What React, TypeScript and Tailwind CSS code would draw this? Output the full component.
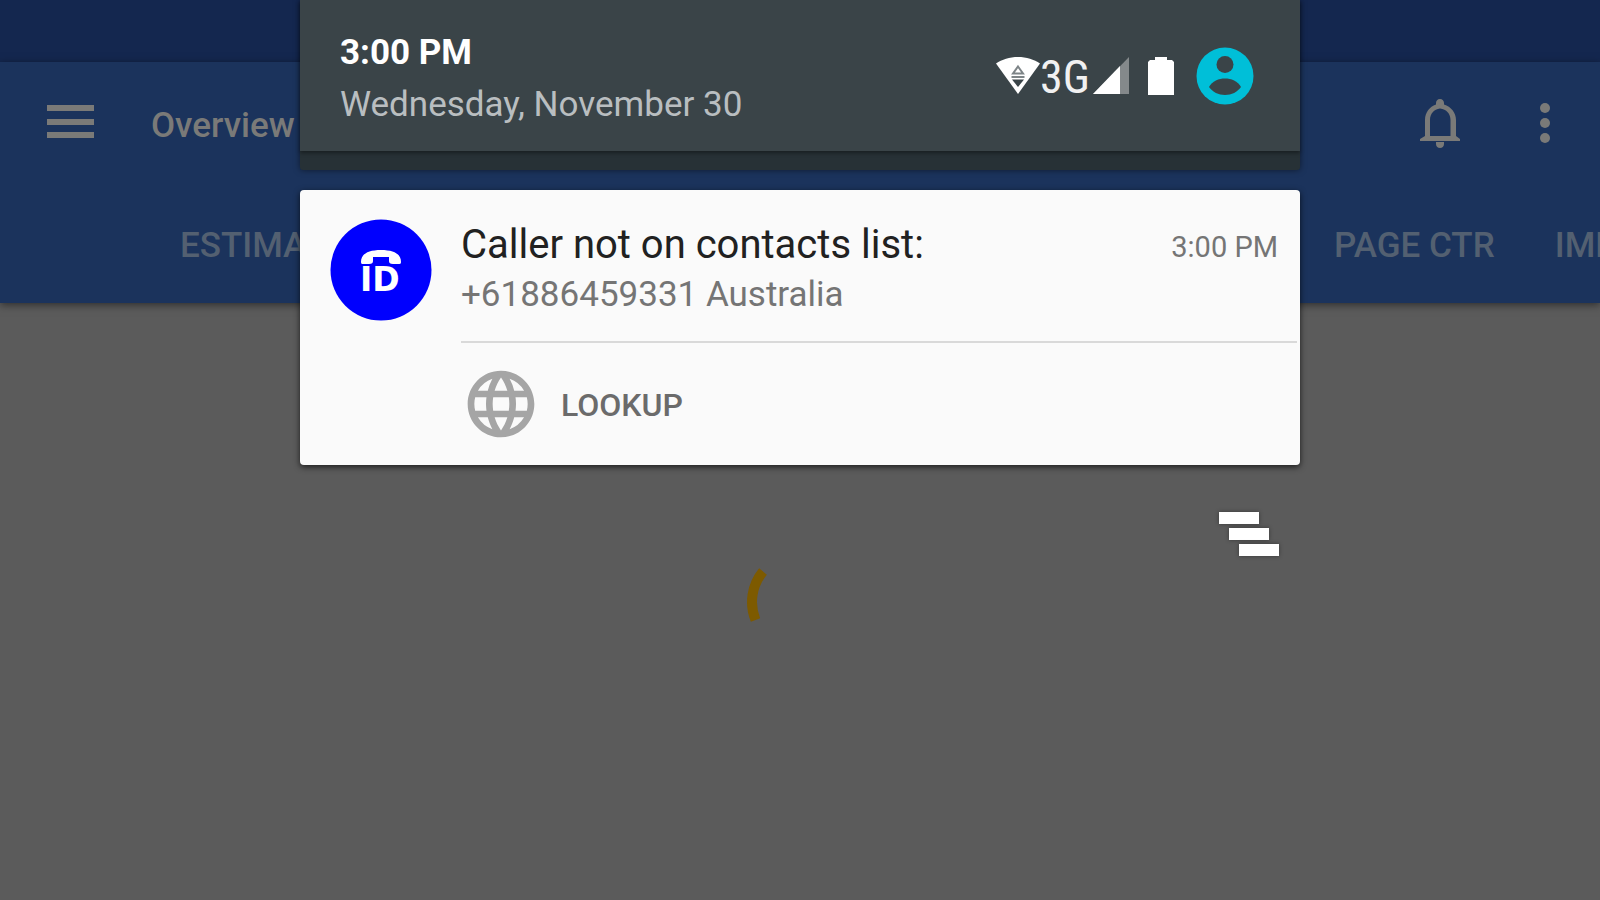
import { MdLanguage } from 'react-icons/md';

function MenuIcon() {
    return (
        <svg viewBox="0 0 48 38" className="w-12 h-[38px]" fill="currentColor" aria-hidden="true">
            <rect x="0" y="0" width="47" height="6" />
            <rect x="0" y="14" width="47" height="6" />
            <rect x="0" y="27" width="47" height="6" />
        </svg>
    );
}

function BellIcon() {
    return (
        <svg viewBox="0 0 40 50" className="w-10 h-[50px]" fill="currentColor" aria-hidden="true">
            <path
                fillRule="evenodd"
                d="M20 0c2.500 0 4 1.800 4 4v1.400C31 7.500 36 13.500 36 21v16l4 3v2H0v-2l5-3V21C5 13.500 9.500 7.500 16 5.400V4c0-2.200 1.500-4 4-4zm0 9.500C14 10 10 15 10 21v16h20.500V21c0-6-4-11-10.500-11.500z"
            />
            <path d="M16 43h8v2c0 2.500-1.800 4-4 4s-4-1.500-4-4z" />
        </svg>
    );
}

function MoreIcon() {
    return (
        <svg viewBox="0 0 10 42" className="w-[10px] h-[42px]" fill="currentColor" aria-hidden="true">
            <circle cx="5" cy="5" r="5" />
            <circle cx="5" cy="20" r="5" />
            <circle cx="5" cy="35" r="5" />
        </svg>
    );
}

function WifiIcon() {
    return (
        <svg viewBox="0 0 44 37" className="w-11 h-[37px]" aria-hidden="true">
            <path d="M0 6.500C6 2.500 13.500 0 22 0s16 2.500 22 6.500L22 37z" fill="#fff" />
            <path d="M22 9.500l5 7H17z" fill="#fff" stroke="#7d8487" strokeWidth="2" />
            <path d="M15.500 20h13" stroke="#7d8487" strokeWidth="2" />
            <path d="M16 22.500h12l-6 7.500z" fill="#3a4448" />
        </svg>
    );
}

function SignalIcon() {
    return (
        <svg viewBox="0 0 36 37" className="w-9 h-[37px]" aria-hidden="true">
            <path d="M36 0v37H0z" fill="#84898b" />
            <path d="M27 9v28H0z" fill="#fff" />
        </svg>
    );
}

function BatteryIcon() {
    return (
        <svg viewBox="0 0 26 38" className="w-[26px] h-[38px]" fill="#fff" aria-hidden="true">
            <path d="M7 0h12v3h5l2 2v33H0V5l2-2h5z" />
        </svg>
    );
}

function AccountIcon() {
    return (
        <svg viewBox="0 0 58 58" className="w-[58px] h-[58px]" aria-hidden="true">
            <circle cx="29" cy="29" r="28.500" fill="#00bfd8" />
            <circle cx="29" cy="17.500" r="8.500" fill="#3a4448" />
            <path d="M13 40c3-6 10-8.500 16-8.500S42 34 45 40c-3.500 5-9.500 8-16 8s-12.500-3-16-8z" fill="#3a4448" />
        </svg>
    );
}

function CallerIdLogo() {
    return (
        <svg viewBox="0 0 102 102" className="w-[102px] h-[102px] shrink-0" role="img" aria-label="Caller ID">
            <circle cx="51" cy="51" r="50.500" fill="#0000fe" />
            <path
                d="M31 43c0-8 7-12 20-12s20 4 20 12c0 2-1 2-3 2h-5c-3 0-4-1-4-3v-4H43v4c0 2-1 3-4 3h-6c-1 0-2 0-2-2z"
                fill="#fff"
            />
            <text x="30" y="72" fill="#fff" className="font-['DejaVu_Sans',sans-serif] text-[33px] font-bold">
                ID
            </text>
        </svg>
    );
}

function Spinner() {
    return (
        <svg viewBox="0 0 120 120" className="w-[120px] h-[120px]" fill="none" role="img" aria-label="Loading">
            <path d="M23 29.500A48 48 0 0 0 15.500 78" stroke="#7d5a00" strokeWidth="10" />
        </svg>
    );
}

function NotificationCard() {
    return (
        <article className="bg-[#fafafa] rounded-[4px] pl-[30px] pr-[3px] pt-[29px] flex items-start shadow-[0_2px_6px_rgba(0,0,0,0.7)]">
            <CallerIdLogo />
            <div className="flex-1 ml-[29px] pt-px">
                <div className="flex justify-between items-start h-[50px] pr-[19px]">
                    <h2 className="text-[40px] leading-[50px] text-[#212121]">Caller not on contacts list:</h2>
                    <time className="pt-[2px] text-[29px] leading-[50px] text-[#757575]">3:00 PM</time>
                </div>
                <p className="text-[35px] leading-[50px] text-[#757575]">+61886459331 Australia</p>
                <div className="mt-[21px] border-t-2 border-[#d9d9d9]">
                    <button className="flex items-center gap-[20px] h-[122px] text-[32px] font-medium text-[#6b6b6b]">
                        <MdLanguage className="w-20 h-20 text-[#a5a5a5]" />
                        <span className="pt-[2px]">LOOKUP</span>
                    </button>
                </div>
            </div>
        </article>
    );
}

export default function App() {
    return (
        <div className="relative min-h-screen flex flex-col overflow-hidden bg-[#5b5b5b] font-['Roboto',sans-serif]">
            <div className="h-[62px] bg-[#14274f]" />
            <header className="h-[241px] bg-[#1b335c] flex flex-col shadow-[0_2px_8px_rgba(0,0,0,0.5)]">
                <div className="h-[124px] flex items-center pl-[47px] pr-[50px] text-[#7a7a78]">
                    <button aria-label="Menu">
                        <MenuIcon />
                    </button>
                    <h1 className="ml-[56px] pt-[4px] text-[35px] font-medium">Overview</h1>
                    <button aria-label="Notifications" className="ml-auto">
                        <BellIcon />
                    </button>
                    <button aria-label="More options" className="ml-20">
                        <MoreIcon />
                    </button>
                </div>
                <nav className="h-[117px] flex justify-between items-center pt-[3px] pl-[180px] text-[35px] font-medium text-[#536071]">
                    <a href="#estimated">ESTIMATED</a>
                    <div className="w-[266px] flex gap-[60px] overflow-hidden whitespace-nowrap">
                        <a href="#ctr" className="shrink-0">PAGE CTR</a>
                        <a href="#impressions" className="shrink-0">IMPRESSIONS</a>
                    </div>
                </nav>
            </header>

            <main className="flex-1 flex items-center justify-center">
                <Spinner />
            </main>

            {/* notification shade, opened on top of the app */}
            <div className="absolute inset-x-0 top-0 flex justify-center">
                <div className="w-full max-w-[1000px]">
                    <div className="bg-[#273136] pb-[19px] rounded-b-[3px] shadow-[0_0_6px_rgba(0,0,0,0.5)]">
                        <div className="h-[151px] bg-[#3a4448] pl-[40px] pr-[46px] flex items-center justify-between shadow-[0_2px_4px_rgba(0,0,0,0.4)]">
                            <div className="pt-[6px]">
                                <p className="text-[35px] leading-[52px] font-bold text-white">3:00 PM</p>
                                <p className="text-[35px] leading-[52px] text-[#b9bec0]">Wednesday, November 30</p>
                            </div>
                            <div className="flex items-center">
                                <WifiIcon />
                                <span className="mr-[3px] pt-[2px] font-['Roboto_Condensed','Liberation_Sans_Narrow','Open_Sans',sans-serif] text-[46px] leading-[52px] text-[#f1f1f1]">3G</span>
                                <SignalIcon />
                                <span className="ml-[19px]">
                                    <BatteryIcon />
                                </span>
                                <span className="ml-[22px]">
                                    <AccountIcon />
                                </span>
                            </div>
                        </div>
                    </div>

                    <div className="mt-5">
                        <NotificationCard />
                    </div>

                    <div className="flex justify-end pr-[21px] pt-[47px]">
                        <button aria-label="Clear all notifications" className="flex flex-col gap-[4px] w-[60px]">
                            <span className="block w-10 h-3 bg-white shadow-[0_0_4px_rgba(0,0,0,0.4)]" />
                            <span className="block w-10 h-3 ml-[10px] bg-white shadow-[0_0_4px_rgba(0,0,0,0.4)]" />
                            <span className="block w-10 h-3 ml-5 bg-white shadow-[0_0_4px_rgba(0,0,0,0.4)]" />
                        </button>
                    </div>
                </div>
            </div>
        </div>
    );
}
